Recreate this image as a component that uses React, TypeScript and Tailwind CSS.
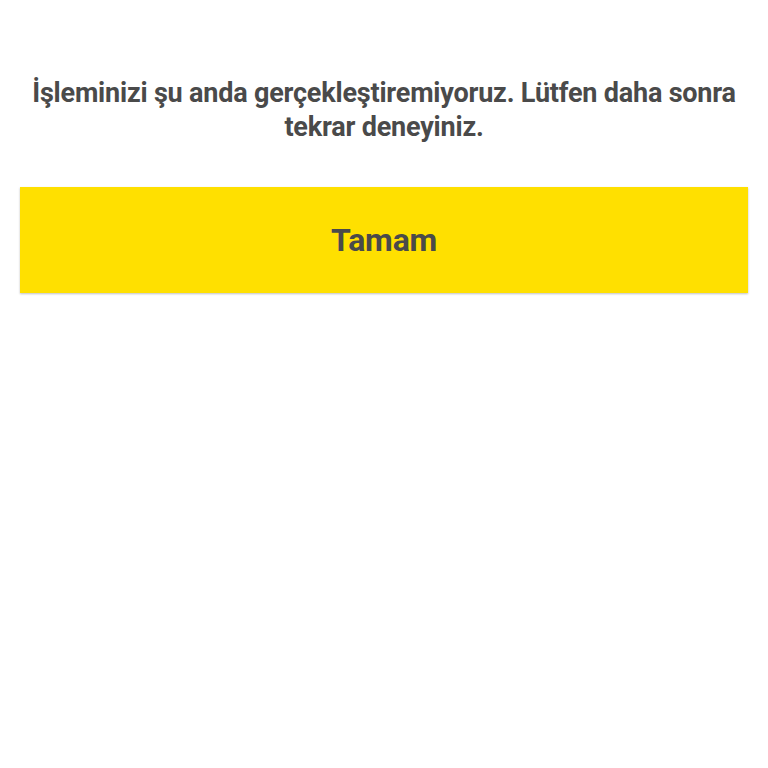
import React from 'react';

export default function App() {
  return (
    <div className="min-h-screen bg-white px-5 pt-[76px] font-['Roboto',sans-serif]">
      <p className="text-center text-[27px] font-bold leading-[34px] tracking-[-0.2px] text-[#4a4a4a]">
        İşleminizi şu anda gerçekleştiremiyoruz. Lütfen daha sonra tekrar deneyiniz.
      </p>
      <button className="mt-[43px] flex h-[106px] w-full items-center justify-center bg-[#ffe000] text-[32px] font-bold tracking-[-0.2px] text-[#4a4a4a] shadow-[0_1px_2px_rgba(0,0,0,0.25)]">
        Tamam
      </button>
    </div>
  );
}
